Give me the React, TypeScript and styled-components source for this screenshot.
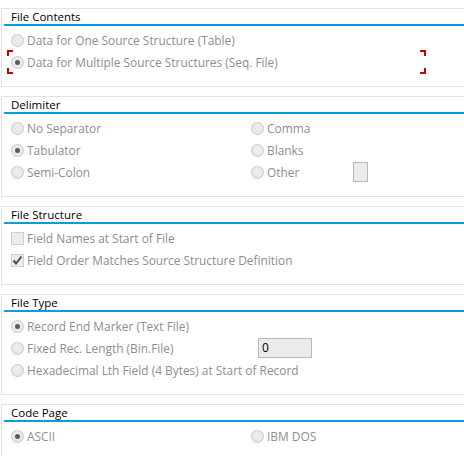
import { ReactNode } from 'react';
import styled, { createGlobalStyle } from 'styled-components';

const GlobalStyle = createGlobalStyle`
    html, body {
        margin: 0;
        padding: 0;
        background: #ffffff;
        overflow: hidden;
    }
    body {
        font-family: 'Open Sans', 'Liberation Sans', sans-serif;
    }
`;

const Page = styled.div`
    width: 480px;
    padding: 8px 0 0 1px;
    display: flex;
    flex-direction: column;
    gap: 9px;
`;

const Panel = styled.section`
    border: 1px solid #e3e3e3;
    background: #ffffff;
`;

const PanelTitle = styled.div`
    margin: 0 2px;
    padding: 0 0 0 7px;
    height: 15px;
    line-height: 15px;
    font-size: 11.5px;
    color: #000000;
    border-bottom: 2px solid #0a9ddb;
`;

const PanelBody = styled.div<{ $columns: string }>`
    padding: 3px 0 13px 9px;
    display: grid;
    grid-template-columns: ${({ $columns }) => $columns};
    grid-auto-rows: 22px;
`;

const Row = styled.div`
    position: relative;
    display: flex;
    align-items: center;
    gap: 3px;
`;

const Label = styled.span<{ $width?: number }>`
    font-size: 11.9px;
    color: #8e8e8e;
    white-space: nowrap;
    width: ${({ $width }) => ($width ? `${$width}px` : 'auto')};
`;

const RadioCircle = styled.span<{ $checked?: boolean }>`
    width: 11px;
    height: 11px;
    flex: none;
    border-radius: 50%;
    border: 1px solid #c9c9c9;
    background: radial-gradient(circle at 50% 40%, #f0f0f0 0%, #e2e2e2 100%);
    display: flex;
    align-items: center;
    justify-content: center;

    &::after {
        content: '';
        display: ${({ $checked }) => ($checked ? 'block' : 'none')};
        width: 5px;
        height: 5px;
        border-radius: 50%;
        background: #5a5a5a;
    }
`;

const CheckSquare = styled.span`
    width: 11px;
    height: 11px;
    flex: none;
    border: 1px solid #cfcfcf;
    background: #e9ecee;
    display: flex;
    align-items: center;
    justify-content: center;
`;

const InputBox = styled.span<{ $width: number }>`
    width: ${({ $width }) => $width}px;
    height: 18px;
    flex: none;
    border: 1px solid #b8b8b8;
    background: #ebebeb;
    box-sizing: content-box;
    font-size: 12px;
    line-height: 18px;
    padding-left: 3px;
    color: #000000;
`;

const FocusFrame = styled.span`
    position: absolute;
    left: -4px;
    top: -1px;
    width: 419px;
    height: 24px;
    pointer-events: none;
`;

const Corner = styled.span<{ $v: 'top' | 'bottom'; $h: 'left' | 'right' }>`
    position: absolute;
    width: 6px;
    height: 6px;
    ${({ $v }) => $v}: 0;
    ${({ $h }) => $h}: 0;
    border-${({ $v }) => $v}: 2px solid #cc0000;
    border-${({ $h }) => $h}: 2px solid #cc0000;
    box-sizing: border-box;
`;

const Radio = ({ label, checked, focused, width, children }: {
    label: string;
    checked?: boolean;
    focused?: boolean;
    width?: number;
    children?: ReactNode;
}) => (
    <Row>
        <RadioCircle $checked={checked} />
        <Label $width={width}>{label}</Label>
        {children}
        {focused && (
            <FocusFrame>
                <Corner $v="top" $h="left" />
                <Corner $v="bottom" $h="left" />
                <Corner $v="top" $h="right" />
                <Corner $v="bottom" $h="right" />
            </FocusFrame>
        )}
    </Row>
);

const Checkbox = ({ label, checked }: { label: string; checked?: boolean }) => (
    <Row>
        <CheckSquare>
            {checked && (
                <svg width="11" height="11" viewBox="0 0 11 11">
                    <path d="M1.5 5.5 L4 8.5 L9.5 1.5" fill="none" stroke="#4a4a4a" strokeWidth="2" />
                </svg>
            )}
        </CheckSquare>
        <Label>{label}</Label>
    </Row>
);

export default function App() {
    return (
        <>
            <GlobalStyle />
            <Page>
                <Panel>
                    <PanelTitle>File Contents</PanelTitle>
                    <PanelBody $columns="1fr">
                        <Radio label="Data for One Source Structure (Table)" />
                        <Radio label="Data for Multiple Source Structures (Seq. File)" checked focused />
                    </PanelBody>
                </Panel>

                <Panel>
                    <PanelTitle>Delimiter</PanelTitle>
                    <PanelBody $columns="240px 1fr">
                        <Radio label="No Separator" />
                        <Radio label="Comma" />
                        <Radio label="Tabulator" checked />
                        <Radio label="Blanks" />
                        <Radio label="Semi-Colon" />
                        <Radio label="Other" width={83}>
                            <InputBox $width={10} />
                        </Radio>
                    </PanelBody>
                </Panel>

                <Panel>
                    <PanelTitle>File Structure</PanelTitle>
                    <PanelBody $columns="1fr">
                        <Checkbox label="Field Names at Start of File" />
                        <Checkbox label="Field Order Matches Source Structure Definition" checked />
                    </PanelBody>
                </Panel>

                <Panel>
                    <PanelTitle>File Type</PanelTitle>
                    <PanelBody $columns="1fr">
                        <Radio label="Record End Marker (Text File)" checked />
                        <Radio label="Fixed Rec. Length (Bin.File)" width={228}>
                            <InputBox $width={49}>0</InputBox>
                        </Radio>
                        <Radio label="Hexadecimal Lth Field (4 Bytes) at Start of Record" />
                    </PanelBody>
                </Panel>

                <Panel>
                    <PanelTitle>Code Page</PanelTitle>
                    <PanelBody $columns="240px 1fr">
                        <Radio label="ASCII" checked />
                        <Radio label="IBM DOS" />
                    </PanelBody>
                </Panel>
            </Page>
        </>
    );
}
